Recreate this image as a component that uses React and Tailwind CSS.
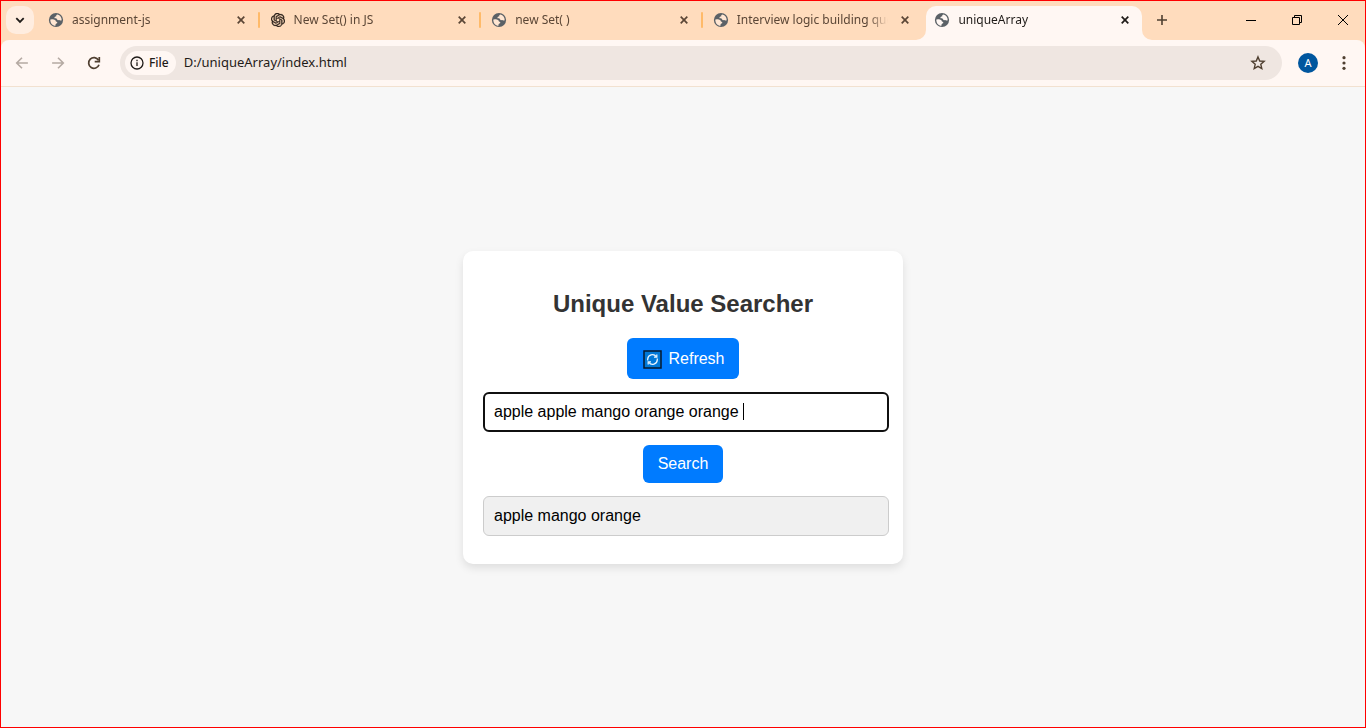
import { SiOpenai } from "react-icons/si";

const TABS = [
  { title: "assignment-js", icon: "globe" },
  { title: "New Set() in JS", icon: "openai" },
  { title: "new Set( )", icon: "globe" },
  { title: "Interview logic building ques", icon: "globe" },
  { title: "uniqueArray", icon: "globe", active: true },
];

function Globe({ active }) {
  return (
    <svg viewBox="0 0 16 16" className="size-4 shrink-0" aria-hidden="true">
      <circle cx="8" cy="8" r="7.1" fill="#5b6166" />
      <path
        d="M9.600 2.600C8.300 2.700 8.100 3.600 8.200 4.400 7.100 4.300 6.200 4.900 6.500 5.900 7 6.700 8.200 6.200 8.800 6.700 9.200 7.900 10 8.500 11 8.100 11.900 8.700 12.900 8.700 13.700 8.300 13.800 5.400 12 3.300 9.600 2.600zM2.300 7.400C3.300 7.500 4.600 7.200 5.600 7.400 7 7.500 8 8.300 7.900 9.500 9.100 9.500 9.600 10.400 9.100 11.200 8 11.400 7.300 12.200 7.500 13.700 4.500 13.600 2.200 11.200 2.300 7.400z"
        fill={active ? "#fff7f3" : "#ffe6d2"}
      />
    </svg>
  );
}

function Cross({ className }) {
  return (
    <svg viewBox="0 0 10 10" className={className} fill="none" stroke="currentColor" aria-hidden="true">
      <path d="M1.700 1.700l6.600 6.600M8.300 1.700L1.700 8.300" strokeWidth="1.700" />
    </svg>
  );
}

function Tab({ title, icon, active, divided }) {
  return (
    <div className="flex min-w-0 flex-1 items-stretch">
      <div
        className={
          active
            ? "relative ml-0.5 mr-1 flex min-w-0 flex-1 items-center rounded-t-[10px] bg-[#fff7f3] pl-2 pr-3 text-[#1f1b18]"
            : divided
              ? "flex min-w-0 flex-1 items-center pb-1.5 pl-2.5 pr-3 text-[#5b4636]"
              : "flex min-w-0 flex-1 items-center pb-1.5 pl-2.5 pr-3.5 text-[#5b4636]"
        }
      >
        {active && (
          <>
            <svg viewBox="0 0 10 10" className="absolute -left-2.5 bottom-0 size-2.5" aria-hidden="true">
              <path d="M10 0v10H0A10 10 0 0 0 10 0z" fill="#fff7f3" />
            </svg>
            <svg viewBox="0 0 10 10" className="absolute -right-2.5 bottom-0 size-2.5" aria-hidden="true">
              <path d="M0 0v10h10A10 10 0 0 1 0 0z" fill="#fff7f3" />
            </svg>
          </>
        )}
        <a href="#tab" className={active ? "flex min-w-0 flex-1 items-center pb-1.5" : "flex min-w-0 flex-1 items-center"}>
          {icon === "globe" ? (
            <Globe active={active} />
          ) : (
            <span className="flex size-4 shrink-0 items-center justify-center">
              <SiOpenai className="size-3.5 stroke-[#2b211a] stroke-[0.6] text-[#2b211a]" />
            </span>
          )}
          <span className="ml-2 mr-3 flex-1 overflow-hidden whitespace-nowrap text-xs [mask-image:linear-gradient(to_right,#000_87%,transparent)]">
            {title}
          </span>
        </a>
        <button type="button" aria-label={"Close " + title} className={active ? "mb-1.5" : ""}>
          <Cross className="size-2.5" />
        </button>
      </div>
      {divided && <span className="mt-1.5 h-4 w-0.5 rounded-full bg-[#ffba69]" />}
    </div>
  );
}

function TabStrip() {
  return (
    <header className="flex h-[39px] items-stretch bg-[#ffdcbd] pl-[5px] pt-[5px]">
      <button
        type="button"
        aria-label="Search tabs"
        className="mr-1 flex size-7 shrink-0 items-center justify-center rounded-[10px] bg-[#ffede0] text-[#1f1b18]"
      >
        <svg viewBox="0 0 10 10" className="size-2.5" fill="none" stroke="currentColor" strokeWidth="1.8" aria-hidden="true">
          <path d="M1.300 3.200L5 6.900l3.700-3.700" />
        </svg>
      </button>
      <nav className="flex min-w-0 shrink basis-[1108px]">
        {TABS.map((tab, i) => (
          <Tab key={tab.title} {...tab} divided={i < 3} />
        ))}
      </nav>
      <div className="flex shrink-0 grow items-center pb-1.5 pl-2.5 pr-[17px]">
        <button type="button" aria-label="New tab" className="mr-auto text-[#4f3f30]">
          <svg viewBox="0 0 12 12" className="size-3" stroke="currentColor" strokeWidth="1.600" aria-hidden="true">
            <path d="M6 1v10M1 6h10" />
          </svg>
        </button>
        <div className="flex items-center gap-9 text-black">
          <button type="button" aria-label="Minimize">
            <svg viewBox="0 0 10 10" className="size-2.5" stroke="currentColor" aria-hidden="true">
              <path d="M0 5.500h10" />
            </svg>
          </button>
          <button type="button" aria-label="Restore">
            <svg viewBox="0 0 10 10" className="size-2.5" fill="none" stroke="currentColor" aria-hidden="true">
              <path d="M.5 2.500h7v7h-7zM2.500 2.500v-2h7v7h-2" />
            </svg>
          </button>
          <button type="button" aria-label="Close window">
            <svg viewBox="0 0 10 10" className="size-2.5" stroke="currentColor" aria-hidden="true">
              <path d="M0 0l10 10M10 0L0 10" />
            </svg>
          </button>
        </div>
      </div>
    </header>
  );
}

function Toolbar() {
  return (
    <div className="bg-[#ffdcbd]">
      <div className="flex h-[47px] items-center rounded-t-lg border-b border-[#f2e1d0] bg-[#fff7f3] pl-[13px] pr-4">
        <div className="flex gap-5">
          <button type="button" aria-label="Back" className="text-[#b5aaa3]">
            <svg viewBox="0 0 16 16" className="size-4" fill="none" stroke="currentColor" strokeWidth="1.600" aria-hidden="true">
              <path d="M13.900 8H2.800M8 2.700L2.700 8 8 13.300" />
            </svg>
          </button>
          <button type="button" aria-label="Forward" className="text-[#b5aaa3]">
            <svg viewBox="0 0 16 16" className="size-4" fill="none" stroke="currentColor" strokeWidth="1.600" aria-hidden="true">
              <path d="M2.100 8h11.100M8 2.700L13.300 8 8 13.300" />
            </svg>
          </button>
          <button type="button" aria-label="Reload" className="text-[#4f3f30]">
            <svg viewBox="0 0 16 16" className="size-4" fill="none" stroke="currentColor" strokeWidth="1.700" aria-hidden="true">
              <path d="M13 9.700A5.300 5.300 0 1 1 12.500 5.200" />
              <path d="M13.300 2v4.700H8.700" />
            </svg>
          </button>
        </div>
        <div className="ml-[18px] flex h-[34px] min-w-0 flex-1 items-center rounded-full bg-[#efe6e1] pl-[5px] pr-4">
          <button type="button" className="flex h-6 items-center gap-1 rounded-full bg-[#fff7f3] pl-1 pr-[7px] text-xs font-medium text-[#1f1b18]">
            <svg viewBox="0 0 16 16" className="size-4" fill="none" stroke="currentColor" strokeWidth="1.300" aria-hidden="true">
              <circle cx="8" cy="8" r="6" />
              <path d="M8 7.300v3.700M8 4.800v1.500" />
            </svg>
            File
          </button>
          <input
            aria-label="Address"
            defaultValue="D:/uniqueArray/index.html"
            className="ml-2 min-w-0 flex-1 bg-transparent text-[13px] text-[#1f1b18] outline-none"
          />
          <button type="button" aria-label="Bookmark" className="text-[#4f3f30]">
            <svg viewBox="0 0 16 16" className="size-4" fill="none" stroke="currentColor" strokeWidth="1.400" aria-hidden="true">
              <path d="M8 1.900l1.750 4.100 4.400.4-3.350 2.900 1 4.350L8 11.350l-3.800 2.300 1-4.350L1.850 6.400l4.400-.4z" />
            </svg>
          </button>
        </div>
        <button
          type="button"
          aria-label="Profile"
          className="ml-4 flex size-5 items-center justify-center rounded-full bg-[#00569e] text-[11px] text-white"
        >
          A
        </button>
        <button type="button" aria-label="Menu" className="ml-[21px] text-[#4f3f30]">
          <svg viewBox="0 0 10 16" className="h-4 w-[10px]" fill="currentColor" aria-hidden="true">
            <circle cx="5" cy="2.700" r="1.600" />
            <circle cx="5" cy="8" r="1.600" />
            <circle cx="5" cy="13.300" r="1.600" />
          </svg>
        </button>
      </div>
    </div>
  );
}

function RefreshIcon() {
  return (
    <svg viewBox="0 0 19 19" className="size-[19px]" fill="none" aria-hidden="true">
      <rect x="1" y="1" width="17" height="17" fill="#0078d7" stroke="#06192c" strokeWidth="1.500" />
      <g stroke="#e9f5ff" strokeWidth="1.300">
        <path d="M4.700 10.500V9.300a4.700 4.700 0 0 1 8.500-2.600M14.300 8.500v1.200a4.700 4.700 0 0 1-8.500 2.600" />
        <path d="M13.800 4.500v2.700h-2.800M5.200 14.500v-2.700h2.800" />
      </g>
    </svg>
  );
}

function SearcherCard() {
  return (
    <section className="flex w-[440px] flex-col items-center rounded-[10px] bg-white px-5 pb-7 pt-[39px] font-['Liberation_Sans',Arial,sans-serif] text-base text-black shadow-[0_4px_8px_rgba(0,0,0,0.1)]">
      <h2 className="mb-[21px] text-2xl/[27px] font-bold text-[#333333]">Unique Value Searcher</h2>
      <button type="button" className="flex h-[41px] items-center gap-1.5 rounded-[6px] bg-[#007bff] pl-4 pr-3.5 pt-0.5 text-white">
        <RefreshIcon />
        Refresh
      </button>
      <div className="relative mt-[13px] w-full">
        <input
          aria-label="Values"
          defaultValue="apple apple mango orange orange "
          className="h-10 w-[calc(100%+6px)] rounded-[6px] border-2 border-[#101010] bg-white px-[9px] outline-none"
        />
        <span className="absolute left-[260px] top-[11px] h-[17px] w-px bg-black" />
      </div>
      <button type="button" className="mt-[13px] h-[38px] rounded-[6px] bg-[#007bff] px-[15px] text-white">
        Search
      </button>
      <div className="mt-[13px] w-full">
        <input
          aria-label="Unique values"
          readOnly
          value="apple mango orange"
          className="h-10 w-[calc(100%+6px)] rounded-[6px] border border-[#cccccc] bg-[#f0f0f0] px-2.5 outline-none"
        />
      </div>
    </section>
  );
}

export default function App() {
  return (
    <div className="flex min-h-screen flex-col border border-[#ff0000] bg-[#f7f7f7] font-['Noto_Sans',sans-serif]">
      <TabStrip />
      <Toolbar />
      <main className="flex flex-1 items-center justify-center">
        <SearcherCard />
      </main>
    </div>
  );
}
